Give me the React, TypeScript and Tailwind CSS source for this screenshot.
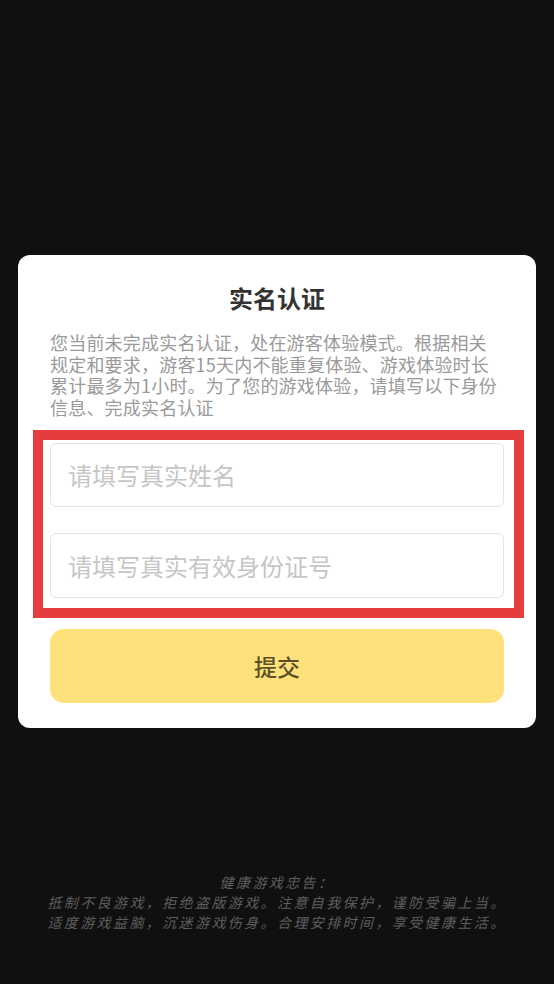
import React from "react";

export default function App() {
  const font = { fontFamily: '"Noto Sans CJK SC", "Noto Sans", sans-serif' };
  return (
    <div className="w-[554px] h-[984px] bg-[#101010] flex flex-col" style={font}>
      <div className="h-[255px] shrink-0" />
      <div className="mx-[18px] bg-white rounded-[12px] px-[32px] pt-[27px] pb-[25px] flex flex-col">
        <div className="text-center text-[24px] leading-[32px] font-bold text-[#333333]">实名认证</div>
        <p className="mt-[18px] text-[18px] leading-[21.5px] text-[#9a9a9a] tracking-[0.2px]">
          您当前未完成实名认证，处在游客体验模式。根据相关规定和要求，游客15天内不能重复体验、游戏体验时长累计最多为1小时。为了您的游戏体验，请填写以下身份信息、完成实名认证
        </p>
        <div className="relative mt-[25px] flex flex-col gap-[26px]">
          <div className="h-[64px] border-[1.5px] border-[#e4e4e4] rounded-[6px] flex items-center pl-[17px]">
            <input
              className="w-full outline-none bg-transparent text-[24px] text-[#333] placeholder:text-[#c6c6c6]"
              placeholder="请填写真实姓名"
              style={font}
            />
          </div>
          <div className="h-[65px] border-[1.5px] border-[#e4e4e4] rounded-[6px] flex items-center pl-[17px]">
            <input
              className="w-full outline-none bg-transparent text-[24px] text-[#333] placeholder:text-[#c6c6c6]"
              placeholder="请填写真实有效身份证号"
              style={font}
            />
          </div>
          <div className="pointer-events-none absolute top-[-13px] bottom-[-20px] left-[-17px] right-[-20px] border-[10px] border-[#e43c3f]" />
        </div>
        <button className="mt-[31px] h-[74px] rounded-[14px] bg-[#ffe17b] text-[23px] font-medium text-[#5a5226] flex items-center justify-center">
          提交
        </button>
      </div>
      <div className="flex-1" />
      <div className="pb-[52px] flex flex-col items-center text-[14px] leading-[20px] italic text-[#5e5e5e] tracking-[2.4px]">
        <div>健康游戏忠告：</div>
        <div>抵制不良游戏，拒绝盗版游戏。注意自我保护，谨防受骗上当。</div>
        <div>适度游戏益脑，沉迷游戏伤身。合理安排时间，享受健康生活。</div>
      </div>
    </div>
  );
}
